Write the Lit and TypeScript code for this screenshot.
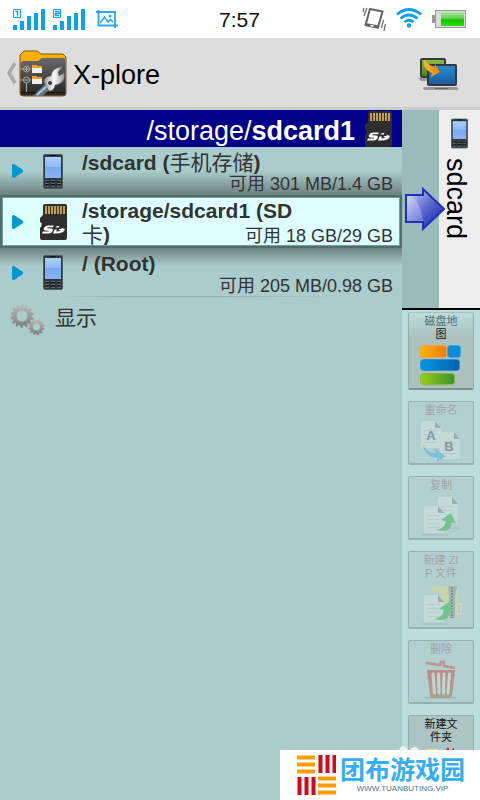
import { LitElement, html, css, svg } from "lit";
import { customElement } from "lit/decorators.js";
import { classMap } from "lit/directives/class-map.js";

interface Volume {
  icon: "phone" | "sd";
  before: string;
  cjk: string;
  after: string;
  free: string;
  selected?: boolean;
}

const volumes: Volume[] = [
  { icon: "phone", before: "/sdcard (", cjk: "手机存储", after: ")", free: "可用 301 MB/1.4 GB" },
  { icon: "sd", before: "/storage/sdcard1 (SD ", cjk: "卡", after: ")", free: "可用 18 GB/29 GB", selected: true },
  { icon: "phone", before: "/ (Root)", cjk: "", after: "", free: "可用 205 MB/0.98 GB" },
];

const phone = html`<svg class="phone" viewBox="0 0 20 35" aria-hidden="true">
  <defs>
    <linearGradient id="scr" x2="0" y2="1"><stop stop-color="#a9cffa" /><stop offset=".45" stop-color="#8fbcf5" /><stop offset=".5" stop-color="#79a9ee" /><stop offset="1" stop-color="#8ab4f4" /></linearGradient>
  </defs>
  <rect x=".5" y=".5" width="19" height="34" rx="1.5" fill="#30373a" stroke="#4e5b5f" />
  <path d="M7 1.500h6" stroke="#111" />
  <rect x="2" y="3" width="16" height="21" fill="url(#scr)" />
  <path d="M2 26.500h4M8 26.500h4M14 26.500h4M2 29.500h4M8 29.500h4M14 29.500h4M2 32.500h4M8 32.500h4M14 32.500h4" stroke="#5f696d" />
  <path d="M3 27.500h3M8 27.500h4M14 27.500h3M3 30.500h3M8 30.500h4M14 30.500h3" stroke="#121718" />
</svg>`;

const sd = html`<svg class="sd" viewBox="0 0 27 36" aria-hidden="true">
  <path d="M5 0H25Q27 0 27 2V34Q27 36 25 36H2Q0 36 0 34V24L1.500 22V19L0 18V14L3 11V2Q3 0 5 0Z" fill="#2e2e2e" />
  <path d="M6 2V10M9 2V10M12 2V10M15 2V10M18 2V10M21 2V10M24 2V10" stroke="#c2a048" stroke-width="2" />
  <path d="M14 21.500L13 23.300H7.500L7.300 24.200L11.500 24.500Q13.500 25 12.500 27.200Q11.500 29.500 8.500 29.500H2L3 27.600H8.700L9 26.700L5 26.400Q3 26 4 24Q5 21.500 8 21.500Z" fill="#fff" />
  <path d="M14.500 25.500H17L16.200 27.600Q20 27.500 21 26.200H18.500L19 25H21.800L21.300 23.800L24.500 24.800Q25.500 26.500 22.500 28.200Q19.500 29.500 15.500 29.500H13ZM16 22.500L19.500 21.800L18.800 23.500H15.500Z" fill="#fff" />
</svg>`;

const gearPath = (r: number, n: number) => {
  const out: string[] = [];
  for (let i = 0; i < n; i++) {
    const w = (Math.PI * 2) / n;
    const a = i * w;
    for (const [f, k] of [[0, 0.82], [0.25, 0.82], [0.35, 1], [0.8, 1], [0.9, 0.82]]) {
      out.push(`${(Math.cos(a + f * w) * r * k).toFixed(2)},${(Math.sin(a + f * w) * r * k).toFixed(2)}`);
    }
  }
  return `M${out.join("L")}Z`;
};

const gears = html`<svg class="gears" viewBox="0 0 35 32" aria-hidden="true">
  <defs><linearGradient id="gg" x2="0" y2="1"><stop stop-color="#bcbcbc" /><stop offset="1" stop-color="#7d7d7d" /></linearGradient></defs>
  <path transform="translate(12 12)" fill="url(#gg)" fill-rule="evenodd" d="${gearPath(11.7, 14)}M-5.500 0a5.500 5.500 0 1 0 11 0a5.500 5.500 0 1 0-11 0Z" />
  <path transform="translate(26.500 23)" fill="url(#gg)" fill-rule="evenodd" d="${gearPath(8.2, 12)}M-3.500 0a3.500 3.500 0 1 0 7 0a3.500 3.500 0 1 0-7 0Z" />
</svg>`;

const signal = (n: string) => html`<svg class="signal" viewBox="0 0 32 21" aria-hidden="true">
  <path d="M0 16h4v5H0zM7 12h4v9H7zM14 7h4v14h-4zM21 4h4v17h-4zM28 0h4v21h-4z" fill="#0aa2ee" />
  <path d="M.5.500h7v8h-7z" fill="#fff" stroke="#0aa2ee" />
  <path d="${n === "1" ? "M2.500 2.500H4.500V7.500" : "M2 2.500h4v2H2.500v2H6"}" fill="none" stroke="#0aa2ee" stroke-width="1.300" />
</svg>`;

const page = (x: number, y: number) => svg`
  <path d="M${x} ${y}h14l6 7v20h-20z" fill="#cfdedd" />
  <path d="M${x + 14} ${y}v7h6z" fill="#8b9d9d" />
  <path d="M${x + 3} ${y + 9.5}h13M${x + 3} ${y + 13.5}h13M${x + 3} ${y + 17.5}h13M${x + 3} ${y + 21.5}h13" stroke="#b9cccb" />`;

const greenArrow = svg`<path d="M12 31Q21 30 22 22L17 21L27 14L32 25L28 23Q27 35 12 31Z" fill="#4fbf6c" />`;

const diskMap = html`<svg class="tool-icon" viewBox="0 0 42 42" aria-hidden="true">
  <defs>
    <linearGradient id="d1"><stop stop-color="#ffb503" /><stop offset="1" stop-color="#ea7b16" /></linearGradient>
    <linearGradient id="d2"><stop stop-color="#0597e4" /><stop offset="1" stop-color="#0561ad" /></linearGradient>
    <linearGradient id="d3"><stop stop-color="#99cf18" /><stop offset="1" stop-color="#3f8f2f" /></linearGradient>
  </defs>
  <rect x=".5" y="1.500" width="26" height="12" rx="3" fill="url(#d1)" stroke="#f2a531" />
  <rect x="27.500" y="1.500" width="13" height="12" rx="3" fill="#088bd8" stroke="#3ba6e0" />
  <rect x=".5" y="15.500" width="39" height="11" rx="3" fill="url(#d2)" stroke="#2d8fd4" />
  <rect x=".5" y="29.500" width="34" height="11" rx="3" fill="url(#d3)" stroke="#85bd36" />
</svg>`;

const rename = html`<svg class="tool-icon" viewBox="0 0 42 42" aria-hidden="true">
  ${page(1, 1)}${page(20, 12)}
  <text x="11" y="20" class="glyph">A</text><text x="29" y="31" class="glyph">B</text>
  <path d="M3 25Q7 33 16 33L14 28L26 36L17 42L17 38Q5 37 3 25Z" fill="#68b5dd" />
</svg>`;

const copy = html`<svg class="tool-icon" viewBox="0 0 42 42" aria-hidden="true">
  <path d="M2 40h26M22 33h19" stroke="#9ab5b4" />
  ${page(18, 2)}${page(4, 11)}<g transform="translate(4 4)">${greenArrow}</g>
</svg>`;

const zip = html`<svg class="tool-icon" viewBox="0 0 42 42" aria-hidden="true">
  <path d="M2 41h26" stroke="#9ab5b4" />
  <path d="M12 5Q12 3 14 3H36Q38 3 38 5V34H20V9H12Z" fill="#d3d89a" />
  <path d="M37 21h4v10h-4z" fill="none" stroke="#d9dda8" stroke-width="2" />
  ${page(4, 12)}
  <path d="M28 3H37L35 14V35H29V14Z" fill="#97a9a8" /><path d="M32 4V35" stroke="#617777" stroke-width="2" stroke-dasharray="2 1" />
  <g transform="translate(2 5)">${greenArrow}</g>
</svg>`;

const trash = html`<svg class="tool-icon" viewBox="0 0 42 42" aria-hidden="true">
  <defs><linearGradient id="tr" x2="0" y2="1"><stop stop-color="#c9665c" /><stop offset="1" stop-color="#a98b6c" /></linearGradient></defs>
  <path d="M5 39H36" stroke="#8fb6bf" stroke-width="2" />
  <path d="M6 4L20 6L21 3H24L24 7L35 9" fill="none" stroke="#c3766e" stroke-width="2.500" />
  <path d="M7 11H35L32 37Q31 39 29 39H13Q10 39 10 37Z" fill="url(#tr)" />
  <path d="M13 15L14.500 34M18.500 15L19 34M24 15L23.500 34M29.500 15L28 34" stroke="#c6dcda" stroke-width="3" stroke-linecap="round" />
</svg>`;

const newFolder = html`<svg class="tool-icon" viewBox="0 0 42 42" aria-hidden="true">
  <path d="M4 5Q4 2 7 2H18L21 6H36Q39 6 39 9V34H4Z" fill="#f6dc7c" />
  <path d="M28 0l2 4 4-3 0 5 5 0-3 4 4 3-5 1 0 5-5-3-4 4-1-5-5 0 3-4-4-4 5-1z" fill="#d02a1c" />
</svg>`;

const tools = [
  { lines: ["磁盘地", "图"], icon: diskMap, kind: "tall shaded", off: false },
  { lines: ["重命名"], icon: rename, kind: "", off: true },
  { lines: ["复制"], icon: copy, kind: "", off: true },
  { lines: ["新建 ZI", "P 文件"], icon: zip, kind: "tall", off: true },
  { lines: ["删除"], icon: trash, kind: "", off: true },
  { lines: ["新建文", "件夹"], icon: newFolder, kind: "tall", off: false },
];

@customElement("x-status-bar")
class StatusBar extends LitElement {
  static styles = css`
    :host { display: grid; grid-template-columns: 1fr auto 1fr; align-items: center; height: 38px; padding: 0 14px 0 13px; background: #fff; }
    .left, .right { display: flex; align-items: center; gap: 8px; }
    .right { justify-content: flex-end; gap: 10px; }
    .signal { width: 32px; height: 21px; }
    .pic { width: 22px; height: 19px; margin-left: 3px; }
    .vib { width: 24px; height: 24px; }
    .wifi { width: 26px; height: 20px; margin-bottom: 3px; }
    .bat { width: 34px; height: 18px; }
    .time { font-size: 21px; line-height: 24px; padding-top: 2px; color: #111; }
  `;
  render() {
    return html`
      <div class="left">
        ${signal("1")}${signal("2")}
        <svg class="pic" viewBox="0 0 22 19" aria-hidden="true"><path d="M0 2H19V18M2.500 0V15.500H22" fill="none" stroke="#27a9e8" stroke-width="1.800" /><path d="M4 13L8.500 7L12 12L14.500 9.500L17 12" fill="none" stroke="#27a9e8" stroke-width="1.500" /><circle cx="14" cy="6" r="1.500" fill="#27a9e8" /></svg>
      </div>
      <time class="time">7:57</time>
      <div class="right">
        <svg class="vib" viewBox="0 0 24 24" aria-hidden="true"><path d="M8 2L20.500 4.500L16 20.500L3.500 18Z" fill="none" stroke="#636363" stroke-width="2" /><path d="M3.500 16L17 18.500L16 21.500L3 19Z" fill="#636363" /><path d="M8.500 18.500l3 .8" stroke="#fff" stroke-width="1.500" /><path d="M2 1L1 5M5 1L2 9M21.500 13l-2 8M23.500 17l-1.500 7" stroke="#636363" stroke-width="1.200" /></svg>
        <svg class="wifi" viewBox="0 0 26 20" aria-hidden="true"><g fill="none" stroke="#0aa2ee" stroke-width="2.800"><path d="M1 6.500Q13-3.500 25 6.500M4.500 10.500Q13 3.500 21.500 10.500M8.500 14Q13 10.500 17.500 14" /></g><circle cx="13" cy="17.500" r="2.200" fill="#0aa2ee" /></svg>
        <svg class="bat" viewBox="0 0 34 18" aria-hidden="true"><defs><linearGradient id="b" x2="0" y2="1"><stop stop-color="#b0e8a8" /><stop offset=".5" stop-color="#53cf43" /><stop offset=".55" stop-color="#13c000" /><stop offset="1" stop-color="#2ce010" /></linearGradient></defs><path d="M0 5h3v8H0z" fill="#999" /><rect x="3.500" y=".5" width="30" height="17" fill="#dcdcdc" stroke="#9a9a9a" /><rect x="9" y="2" width="23" height="14" fill="url(#b)" /></svg>
      </div>`;
  }
}

@customElement("x-action-bar")
class ActionBar extends LitElement {
  static styles = css`
    :host { display: flex; align-items: center; justify-content: space-between; height: 69px; padding: 0 20px 0 6px; background: #ddd; border-bottom: 3px solid #ccc; }
    button { display: flex; align-items: center; padding: 0; border: 0; background: none; font: inherit; color: #000; }
    .back { width: 11px; height: 22px; margin-right: 2px; }
    .logo { width: 48px; height: 48px; margin-right: 6px; }
    .title { font-size: 27px; line-height: 32px; margin: 0; padding-top: 4px; font-weight: normal; }
    .swap { width: 42px; height: 36px; margin-top: 2px; }
  `;
  render() {
    return html`
      <button aria-label="Back">
        <svg class="back" viewBox="0 0 11 22" aria-hidden="true"><path d="M9 1L3 11L9 21" fill="none" stroke="#aaa" stroke-width="3.500" /></svg>
        <svg class="logo" viewBox="0 0 48 48" aria-hidden="true">
          <defs>
            <linearGradient id="f" x2="0" y2="1"><stop stop-color="#ffb400" /><stop offset="1" stop-color="#f58d00" /></linearGradient>
            <linearGradient id="k" x2="0" y2="1"><stop stop-color="#6a6a6a" /><stop offset="1" stop-color="#252525" /></linearGradient>
            <linearGradient id="w"><stop stop-color="#999" /><stop offset=".5" stop-color="#fafafa" /><stop offset="1" stop-color="#999" /></linearGradient>
          </defs>
          <path d="M1 6L5 2H18L22 5H44L47 8V44Q47 47 44 47H4Q1 47 1 44Z" fill="url(#f)" stroke="#745622" />
          <path d="M1.500 14L4 12H19L23 9H44Q46.500 9 46.500 11V44Q46.500 46.500 44 46.500H4Q1.500 46.500 1.500 44Z" fill="url(#k)" />
          <path d="M2 43.500H46" stroke="#151515" />
          <path d="M1 20H12M1 31H12M7.500 33V43" stroke="#aaa" />
          <circle cx="7.500" cy="20" r="3" fill="#555" stroke="#aaa" /><circle cx="7.500" cy="31" r="3" fill="#444" stroke="#aaa" />
          <path d="M5.500 20h4M7.500 18v4M5.500 31h4" stroke="#bbb" />
          <path d="M13 16h4l1 1h5v7H13zM13 27h4l1 1h5v7H13z" fill="#eee" /><path d="M13 16h4l1 1h5v2H13zM13 27h4l1 1h5v2H13z" fill="#f9a11b" />
          <path d="M14 47Q21 40 26 35L32 40Q27 43 24 47Z" fill="#63727f" /><path d="M18 46L28 37" stroke="#b8c6d0" stroke-width="2" />
          <path d="M25 33Q25 28 32 27Q33 19 43 18L39 23L40 27L45 24Q47 34 36 36Q35 42 30 42Z" fill="url(#w)" stroke="#777" stroke-width=".6" />
          <circle cx="31" cy="34" r="2.500" fill="#393939" stroke="#ddd" />
        </svg>
        <h1 class="title">X-plore</h1>
      </button>
      <button aria-label="Switch panes">
        <svg class="swap" viewBox="0 0 42 36" aria-hidden="true">
          <defs><linearGradient id="g" x2="0" y2="1"><stop stop-color="#91bd3b" /><stop offset="1" stop-color="#467f20" /></linearGradient><linearGradient id="l" x2="0" y2="1"><stop stop-color="#258fcd" /><stop offset="1" stop-color="#1a5b9e" /></linearGradient><linearGradient id="o"><stop stop-color="#ffb72c" /><stop offset="1" stop-color="#f07f0c" /></linearGradient></defs>
          <path d="M0 22h12v3H3z" fill="#999" />
          <rect x="3" y="3" width="24" height="18" rx="1" fill="url(#g)" stroke="#393d38" stroke-width="2" />
          <path d="M7 31H39L41 33Q40 34 38 34H8Q5 34 5 32Z" fill="#979797" /><path d="M17 32.500h13" stroke="#666" />
          <rect x="10" y="9" width="28" height="20" rx="1" fill="url(#l)" stroke="#30373e" stroke-width="2" />
          <path d="M6 4Q12 10 17 11L17 8L22 16L13 21L14 17Q5 14 6 4Z" fill="url(#o)" />
        </svg>
      </button>`;
  }
}

@customElement("x-volume-list")
class VolumeList extends LitElement {
  static styles = css`
    :host { display: block; background: #acc; min-width: 0; }
    .path { display: flex; align-items: center; justify-content: flex-end; gap: 10px; height: 37px; padding-right: 10px; background: #000089; color: #fff; font-size: 27px; margin: 0; font-weight: normal; }
    .path .label { line-height: 30px; padding-top: 4px; }
    .sd { width: 27px; height: 36px; flex: none; }
    .phone { width: 20px; height: 35px; flex: none; }
    .row { box-sizing: border-box; display: grid; grid-template-columns: 24px 46px 1fr; align-items: center; width: 100%; height: 49px; padding: 0 9px 0 12px; border: 0; background: none; font: inherit; color: #333; text-align: left; }
    .above { height: 48px; background: linear-gradient(#acc 0 50%, #6f8080); }
    .below { background: linear-gradient(90deg, #acc 60px, #9aabb0 120px, #9aabb0 220px, #acc 340px) bottom / 100% 1px no-repeat, linear-gradient(#6f8080, #acc 18px); }
    .selected { height: 53px; padding: 0 7px 0 10px; background: #dff; border: 2px solid #4c6e6e; outline: 1px solid #7c9c9c; outline-offset: -3px; }
    .play { width: 11px; height: 14px; }
    .icon { display: flex; justify-content: center; width: 34px; }
    .text { display: grid; align-self: stretch; }
    .name { grid-area: 1 / 1; align-self: start; max-width: 230px; font-size: 21px; line-height: 24px; padding-top: 4px; font-weight: bold; }
    .selected .name { padding-top: 2px; }
    .name .cjk { font-weight: normal; }
    .free { grid-area: 1 / 1; align-self: end; justify-self: end; font-size: 18px; line-height: 22px; }
    .more { display: flex; align-items: center; gap: 10px; height: 46px; padding: 0 10px; border: 0; background: none; font: inherit; font-size: 21px; line-height: 24px; color: #333; }
    .more span { padding-bottom: 4px; }
    .gears { width: 35px; height: 32px; }
  `;
  render() {
    return html`
      <h2 class="path"><span class="label">/storage/<b>sdcard1</b></span>${sd}</h2>
      ${volumes.map(
        (v, i) => html`<button class=${classMap({ row: true, above: i === 0, selected: !!v.selected, below: i === 2 })}>
          <svg class="play" viewBox="0 0 11 14" aria-hidden="true"><path d="M0 1Q0 0 2 0L11 6V8L2 14Q0 14 0 13Z" fill="#0099cf" /></svg>
          <span class="icon">${v.icon === "sd" ? sd : phone}</span>
          <span class="text"><span class="name">${v.before}<span class="cjk">${v.cjk}</span>${v.after}</span><span class="free">${v.free}</span></span>
        </button>`,
      )}
      <button class="more">${gears}<span>显示</span></button>`;
  }
}

@customElement("x-side-bar")
class SideBar extends LitElement {
  static styles = css`
    :host { display: block; background: #bdd; }
    .peek { display: grid; grid-template-columns: 37px 1fr; height: 198px; background: #9bb; border-bottom: 2px solid #000; }
    .arrow { width: 40px; height: 46px; margin-left: 3px; align-self: center; position: relative; z-index: 1; }
    .other { display: flex; flex-direction: column; align-items: center; gap: 9px; padding: 8px 0 0; border: 0; background: #eee; font: inherit; font-size: 27px; line-height: 34px; color: #000; }
    .phone { width: 17px; height: 31px; }
    .vertical { writing-mode: vertical-rl; align-self: flex-start; }
    .tools { display: flex; flex-direction: column; gap: 11px; padding: 2px 6px 0; }
    .tool { box-sizing: border-box; display: flex; flex-direction: column; align-items: center; height: 64px; padding: 2px 0 0; border: 1px solid #97aeae; border-bottom: 2px solid #7f9292; border-radius: 2px; background: #adc4c4; font: inherit; font-size: 11px; line-height: 13px; color: #111; }
    .tall { height: 78px; }
    .shaded { border-top-color: transparent; background: linear-gradient(#bdd, #abc0bf 24px); }
    .tool:disabled { background: #b2d0d0; color: #a3a4a6; border-color: #98b0b0; }
    .tool:disabled .tool-icon { opacity: 0.65; }
    .tool-icon { width: 42px; height: 42px; margin-top: 3px; flex: none; }
    .glyph { font: bold 13px "Liberation Sans", sans-serif; text-anchor: middle; fill: #5f7f88; }
    .first { color: #5b6b6b; }
  `;
  render() {
    return html`
      <div class="peek">
        <svg class="arrow" viewBox="0 0 40 46" aria-hidden="true">
          <defs><linearGradient id="a" x2="1" y2="1"><stop stop-color="#dfe0ff" /><stop offset=".5" stop-color="#5a67d0" /><stop offset="1" stop-color="#0b1fa8" /></linearGradient></defs>
          <path d="M1 9H18V3L39 23L18 43V36H1Z" fill="url(#a)" stroke="#2430b8" stroke-width="2" />
          <path d="M2 10H7Q17 20 18 35H2Z" fill="#fff" opacity=".25" />
        </svg>
        <button class="other">${phone}<span class="vertical">sdcard</span></button>
      </div>
      <div class="tools">
        ${tools.map(
          (t, i) => html`<button class="tool ${t.kind}" ?disabled=${t.off}>
            ${t.lines.map((l, j) => html`<span class=${i === 0 && j === 0 ? "first" : ""}>${l}</span>`)}${t.icon}
          </button>`,
        )}
      </div>`;
  }
}

@customElement("x-site-badge")
class SiteBadge extends LitElement {
  static styles = css`
    :host { display: flex; align-items: center; gap: 4px; height: 50px; padding-left: 17px; box-sizing: border-box; background: #fff; }
    .mark { width: 39px; height: 40px; flex: none; }
    .words { display: flex; flex-direction: column; align-items: center; }
    .brand { display: flex; align-items: center; font-size: 25px; line-height: 28px; font-weight: bold; color: #35adf5; white-space: nowrap; }
    .url { font-size: 8px; line-height: 10px; color: #4e7088; }
    .paw { position: absolute; left: 119px; top: -4px; width: 20px; height: 5px; }
  `;
  render() {
    return html`
      <svg class="paw" viewBox="0 0 20 5" aria-hidden="true"><path d="M0 5Q1 0 5 0Q8 1 9 5ZM11 5Q12 1 15 1Q19 1 20 5Z" fill="#eef4f4" /></svg>
      <svg class="mark" viewBox="0 0 39 40" aria-hidden="true">
        <path d="M0 2.500h18M0 9.500h18M0 16.500h18M21 23.500h18M21 30.500h18M21 37.500h18" stroke="#ff9c0a" stroke-width="4" />
        <path d="M23.500 0v18M30.500 0v18M37.500 0v18M2.500 22v18M9.500 22v18M16.500 22v18" stroke="#d0091c" stroke-width="4" />
      </svg>
      <span class="words"><span class="brand">团布游戏园</span><span class="url">WWW.TUANBUTING.VIP</span></span>`;
  }
}

@customElement("app-root")
class AppRoot extends LitElement {
  static styles = css`
    :host { display: flex; flex-direction: column; min-height: 100vh; font-family: "Liberation Sans", "Noto Sans CJK SC", sans-serif; background: #acc; }
    .panes { flex: 1; display: grid; grid-template-columns: 1fr 78px; }
    .badge { position: fixed; right: 0; bottom: 0; width: 200px; z-index: 2; }
  `;
  render() {
    return html`
      <x-status-bar></x-status-bar>
      <x-action-bar></x-action-bar>
      <main class="panes"><x-volume-list></x-volume-list><x-side-bar></x-side-bar></main>
      <x-site-badge class="badge"></x-site-badge>`;
  }
}
